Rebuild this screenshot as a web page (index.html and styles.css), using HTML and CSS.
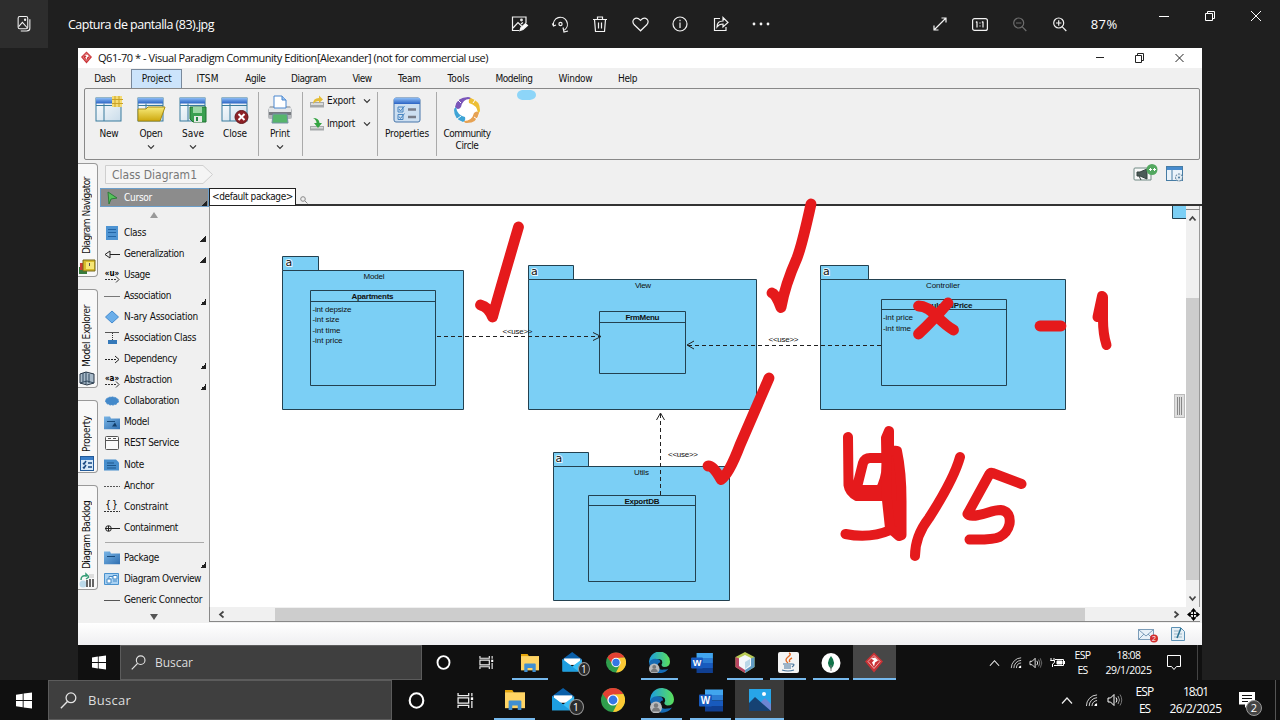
FILE: index.html
```html
<!DOCTYPE html>
<html lang="es">
<head>
<meta charset="utf-8">
<title>Captura de pantalla (83).jpg</title>
<link rel="stylesheet" href="styles.css">
</head>
<body>
<svg class="defs" width="0" height="0">
  <defs>
    <linearGradient id="gBlue" x1="0" y1="0" x2="0" y2="1"><stop offset="0" stop-color="#8cbcf5"/><stop offset="1" stop-color="#2b63c4"/></linearGradient>
    <linearGradient id="gPane" x1="0" y1="0" x2="1" y2="1"><stop offset="0" stop-color="#fff"/><stop offset="1" stop-color="#c9dcea"/></linearGradient>
    <linearGradient id="gYellow" x1="0" y1="0" x2="0" y2="1"><stop offset="0" stop-color="#f8ec7c"/><stop offset="1" stop-color="#cda80d"/></linearGradient>
    <linearGradient id="gEdge" x1="0" y1="0" x2="1" y2="0"><stop offset="0" stop-color="#1b9de2"/><stop offset="1" stop-color="#5be05a"/></linearGradient>
    <linearGradient id="gFolder" x1="0" y1="0" x2="1" y2="1"><stop offset="0" stop-color="#79b5e6"/><stop offset="1" stop-color="#2f6eb0"/></linearGradient>
  </defs>
  <symbol id="win" viewBox="0 0 16 16"><path fill="#fff" d="M0 2.2 6.700 1.200V7.500H0zM7.600 1.100 16 0v7.500H7.600zM0 8.500h6.700v6.300L0 13.800zM7.600 8.500H16V16l-8.400-1.100z"/></symbol>
  <symbol id="search" viewBox="0 0 16 16"><circle cx="10.300" cy="5.500" r="4.600" fill="none" stroke="#e4e4e4" stroke-width="1.200"/><path d="M7 9 .8 15.300" stroke="#e4e4e4" stroke-width="1.300"/></symbol>
  <symbol id="cortana" viewBox="0 0 16 16"><ellipse cx="8" cy="8" rx="6.400" ry="6.800" fill="none" stroke="#fff" stroke-width="2"/></symbol>
  <symbol id="taskview" viewBox="0 0 16 16"><path d="M1 1v2.500h10V1M1 15v-2.500h10V15M1 5.500h10v5H1zM14 1v3M14 8.500V15" fill="none" stroke="#eee" stroke-width="1.200"/><path d="M13 5h2.200v2.500H13z" fill="#fff"/></symbol>
  <symbol id="explorer" viewBox="0 0 22 22"><path d="M0 0h8l2 3H0z" fill="#e5a50a"/><path d="M0 2.500h22V20H0z" fill="#ffd464"/><path d="M4 12.500q0-1 1-1h12q1 0 1 1V22h-4v-5H8v5H4z" fill="#3f8fd2"/></symbol>
  <symbol id="mail" viewBox="0 0 26 26"><path d="M0 9 12 0l12 9v4H0z" fill="#0a5fa8"/><path d="M2 8h20v8H2z" fill="#fff"/><path d="M0 9v15h24V9l-12 9z" fill="#38bdf5"/><path d="M0 9v15h20z" fill="#1d9ee0"/></symbol>
  <symbol id="chrome" viewBox="0 0 24 24"><circle cx="12" cy="12" r="12" fill="#2f9e4c"/><path d="M1.600 6A12 12 0 0 1 22.400 6L12 7 8 14z" fill="#e34133"/><path d="M22.400 6A12 12 0 0 1 12 24l5-10-5-7.500z" fill="#fcc934"/><circle cx="12" cy="12" r="5.600" fill="#fff"/><circle cx="12" cy="12" r="4.400" fill="#3577e5"/></symbol>
  <symbol id="edge" viewBox="0 0 24 24"><path d="M0 12A12 12 0 0 1 24 11q0 6-7 6-4-1-2-4 1-5-5-5-6 0-10 5z" fill="url(#gEdge)"/><path d="M0 12q3-5 9-4 4 0 4 4-3 0-3 4 1 5 7 4 3 0 5-1-4 6-12 5Q1 22 0 12z" fill="#156bb5"/><circle cx="6" cy="19" r="6" fill="#b9bbbd"/><circle cx="6" cy="17" r="2.200" fill="#77797b"/><path d="M2 23q0-4 4-4t4 4z" fill="#77797b"/></symbol>
  <symbol id="word" viewBox="0 0 24 22"><path d="M6 0h18v6H6z" fill="#41a5ee"/><path d="M6 5.500h18V11H6z" fill="#2b7cd3"/><path d="M6 11h18v5.500H6z" fill="#185abd"/><path d="M6 16.500h18V22H6z" fill="#103f91"/><rect y="5" width="13" height="12" rx="1" fill="#185abd"/><text x="6.500" y="14.500" font-size="10" font-weight="700" fill="#fff" text-anchor="middle" font-family="Liberation Sans">W</text></symbol>
  <symbol id="photos" viewBox="0 0 22 22"><path d="M0 0h22v22H0z" fill="#27a5e8"/><path d="M12 13l4-4 6 6v7H12z" fill="#6c86d3"/><path d="M0 14l6-6 16 14H0z" fill="#164273"/><circle cx="15" cy="5" r="2" fill="#fff"/></symbol>
  <symbol id="chevup" viewBox="0 0 12 8"><path d="M1 7l5-5.500L11 7" fill="none" stroke="#eee" stroke-width="1.200"/></symbol>
  <symbol id="wifi" viewBox="0 0 14 14"><g fill="none" stroke="#ddd" stroke-width="1"><path d="M1.500 13.500A12 12 0 0 1 13 1.500"/><path d="M4.500 13.500A9 9 0 0 1 13 4.500"/><path d="M7.500 13.500A6 6 0 0 1 13 7.500"/></g><path d="M10 13.500a3.500 3.500 0 0 1 3-3v3z" fill="#fff"/></symbol>
  <symbol id="vol" viewBox="0 0 16 14"><path d="M1 5h2.500L7 1.500v11L3.500 9H1z" fill="none" stroke="#fff"/><path d="M9 4.500q2 2.500 0 5" fill="none" stroke="#fff"/><path d="M11 3q3 4 0 8" fill="none" stroke="#999"/><path d="M13 1.500q3.500 5.500 0 11" fill="none" stroke="#777"/></symbol>
  <symbol id="vp" viewBox="0 0 18 20"><path d="M9 0l9 9-9 11L0 9z" fill="#c93135"/><path d="M9 3l6 6-6 7-6-7z" fill="none" stroke="#efaaaa"/><path d="M6 6l4-1 3 3-3 2-1 4-2-4 2-2z" fill="#fff"/></symbol>
  <symbol id="down" viewBox="0 0 8 6"><path d="M1 1.300l3 3 3-3" fill="none" stroke="#333" stroke-width="1.200"/></symbol>
  <symbol id="panel" viewBox="0 0 28 28"><rect x="1" y="2" width="25" height="23" fill="url(#gPane)" stroke="#397b9d"/><path d="M1 2h25v5.500H1z" fill="url(#gBlue)"/><path d="M9 7.500V25M1 9.500h25" stroke="#397b9d" fill="none"/></symbol>
  <symbol id="folder" viewBox="0 0 16 14"><path d="M0 1h6l1 2h9v11H0z" fill="url(#gFolder)"/><path d="M3 6h8" stroke="#174a7b"/></symbol>
</svg>

<header class="photo-bar">
  <div class="photo-tab"><svg width="14" height="16" viewBox="0 0 12 15" fill="none" stroke="#f2f2f2"><rect x=".5" y=".5" width="9" height="11.500" rx="1.500"/><path d="M11.500 3v8.500q0 2.500-3 2.500H3M1 10l3.500-4L9 11"/><circle cx="7" cy="3.500" r=".6"/></svg></div>
  <div class="photo-title"><span data-w="146">Captura de pantalla (83).jpg</span></div>
  <div class="cells">
    <span><svg width="18" height="17" viewBox="0 0 18 17" fill="none" stroke="#f2f2f2" stroke-width="1.200"><path d="M15 7V1H1.500v13.500H8M2 12l5-5.500 4 4M10 8l2-1.500"/><circle cx="10.500" cy="4" r=".8"/><path d="M9 14.500l1-3L14.500 7.500l2 2-4.500 4z" fill="#fff"/></svg></span>
    <span><svg width="17" height="17" viewBox="0 0 17 17" fill="none" stroke="#f2f2f2" stroke-width="1.200"><path d="M1.500 9.500a7 7 0 1 1 11 4.500M11 11.500l1 4.500 4-1M.3 7.500l1.200 2.500 2.500-1"/><circle cx="8.500" cy="8" r="1.600"/></svg></span>
    <span><svg width="16" height="17" viewBox="0 0 16 17" fill="none" stroke="#f2f2f2" stroke-width="1.200"><path d="M1 3.500h14M5.500 3V1h5v2M2.500 3.500l1 12h9l1-12M6.500 6.500v6M9.500 6.500v6"/></svg></span>
    <span><svg width="17" height="15" viewBox="0 0 17 15" fill="none" stroke="#f2f2f2" stroke-width="1.200"><path d="M8.500 13.800L2 7.500Q-.2 4.500 2 2.200 5-.5 8.500 3.300 12-.5 15 2.200q2.200 2.300 0 5.300z"/></svg></span>
    <span><svg width="16" height="16" viewBox="0 0 16 16" fill="none" stroke="#f2f2f2" stroke-width="1.200"><circle cx="8" cy="8" r="7"/><path d="M8 6.500v5.500M8 3.700v1.500"/></svg></span>
    <span><svg width="16" height="16" viewBox="0 0 16 16" fill="none" stroke="#f2f2f2" stroke-width="1.200"><path d="M7 2.500H1.500v12H13V11M4 11q0-6 6-6V1.500l5 5-5 4.500V8Q6 8 4 11z"/></svg></span>
    <span><svg width="18" height="4" viewBox="0 0 18 4" fill="#f2f2f2"><circle cx="2" cy="2" r="1.400"/><circle cx="9" cy="2" r="1.400"/><circle cx="16" cy="2" r="1.400"/></svg></span>
  </div>
  <div class="cells cells-zoom">
    <span><svg width="14" height="14" viewBox="0 0 14 14" fill="none" stroke="#f2f2f2" stroke-width="1.200"><path d="M1 13L13 1M8.500 1H13v4.500M1 8.500V13h4.500"/></svg></span>
    <span><svg width="16" height="13" viewBox="0 0 16 13" fill="none" stroke="#f2f2f2" stroke-width="1.200"><rect x=".6" y=".6" width="14.800" height="11.800" rx="2"/><path d="M5 3.500V9.500M11 3.500V9.500M8 4.500v1M8 7.500v1M4 4.500l1-1M10 4.500l1-1"/></svg></span>
    <span><svg width="14" height="15" viewBox="0 0 14 15" fill="none" stroke="#6d6d6d" stroke-width="1.200"><circle cx="5.700" cy="6" r="5"/><path d="M9.300 9.800l4 4.200M3 6h5.400"/></svg></span>
    <span><svg width="14" height="15" viewBox="0 0 14 15" fill="none" stroke="#f2f2f2" stroke-width="1.200"><circle cx="5.700" cy="6" r="5"/><path d="M9.300 9.800l4 4.200M3 6h5.400M5.700 3.300v5.400"/></svg></span>
  </div>
  <div class="zoom-level"><span data-w="27">87%</span></div>
  <div class="cells window-buttons">
    <span><svg width="10" height="10" viewBox="0 0 10 10" stroke="#fff"><path d="M0 5.500h10"/></svg></span>
    <span><svg width="10" height="10" viewBox="0 0 10 10" fill="none" stroke="#fff"><path d="M.5 2.500h7v7h-7zM2.500 2.500v-2h7v7h-2"/></svg></span>
    <span><svg width="10" height="10" viewBox="0 0 10 10" stroke="#fff"><path d="M0 0l10 10M10 0L0 10"/></svg></span>
  </div>
</header>

<main class="photo">
  <div class="vp-title">
    <svg width="11" height="13"><use href="#vp"/></svg><span class="vp-name" data-w="390">Q61-70 * - Visual Paradigm Community Edition[Alexander] (not for commercial use)</span>
    <div class="cells vp-buttons">
      <span><svg width="10" height="10" viewBox="0 0 10 10" stroke="#222"><path d="M1 4.500h8"/></svg></span>
      <span><svg width="9" height="10" viewBox="0 0 9 10" fill="none" stroke="#222"><path d="M.5 2.500h6v7h-6zM2.500 2.500v-2h6v7h-2"/></svg></span>
      <span><svg width="9" height="10" viewBox="0 0 9 10" stroke="#222"><path d="M.5 1l8 8M8.500 1l-8 8"/></svg></span>
    </div>
  </div>
  <nav class="menu">
    <span data-w="21">Dash</span><span class="on"><b data-w="30">Project</b></span><span data-w="22">ITSM</span><span data-w="20">Agile</span><span data-w="35">Diagram</span><span data-w="19">View</span><span data-w="23">Team</span><span data-w="22">Tools</span><span data-w="37">Modeling</span><span data-w="34">Window</span><span data-w="19">Help</span>
  </nav>
  <section class="ribbon">
    <div class="group files">
      <div class="btn"><svg width="28" height="28" viewBox="0 0 28 28"><use href="#panel"/><path d="M17 0h10v11H17z" fill="#f6dc73"/><path d="M17 3.500h11M17 7.500h11M20 0v11M24 0v11" stroke="#c9a328" fill="none"/></svg><span data-w="19">New</span></div>
      <div class="btn"><svg width="28" height="28" viewBox="0 0 28 28"><use href="#panel"/><path d="M1 25V13h8l2-2h17l-5 14z" fill="url(#gYellow)" stroke="#a88b12"/></svg><span data-w="23">Open</span><svg class="dd" width="8" height="6"><use href="#down"/></svg></div>
      <div class="btn"><svg width="28" height="28" viewBox="0 0 28 28"><use href="#panel"/><path d="M11 11h16v15H14l-3-3z" fill="#3aa050" stroke="#1f7331"/><path d="M14 11h9v6h-9z" fill="#9bd7a5"/><path d="M15 20h8v6h-8z" fill="#e4e9e5"/><path d="M17 21h2v4h-2z" fill="#284"/></svg><span data-w="22">Save</span><svg class="dd" width="8" height="6"><use href="#down"/></svg></div>
      <div class="btn"><svg width="28" height="28" viewBox="0 0 28 28"><use href="#panel"/><circle cx="20.500" cy="21" r="6.500" fill="#8e2126" stroke="#65181b"/><path d="M17.500 18l6 6M23.500 18l-6 6" stroke="#fff" stroke-width="2"/></svg><span data-w="24">Close</span></div>
    </div>
    <div class="group print">
      <div class="btn"><svg width="26" height="28" viewBox="0 0 26 28"><path d="M3 10h20l2 4v7q0 2-2 2H3q-2 0-2-2v-7z" fill="#b4b7ba"/><path d="M2 12h22v4H2z" fill="#e2e4e6"/><path d="M2 16h22v3H2z" fill="#777b80"/><path d="M7 0h8l4 4v8H7z" fill="#fff" stroke="#4a87cf"/><path d="M15 0v4h4" fill="#9dc4f0" stroke="#4a87cf"/><path d="M6 18h14l1 9H5z" fill="#56b56b" stroke="#7590a5"/></svg><span data-w="20">Print</span><svg class="dd" width="8" height="6"><use href="#down"/></svg></div>
    </div>
    <div class="group io">
      <div><svg width="14" height="13" viewBox="0 0 14 13"><path d="M0 7h14v5.500H0z" fill="#a5a8aa"/><path d="M1 8h12v2H1z" fill="#d9dadb"/><path d="M3 9q0-6 6-6V.5l4 4-4 3.500V6Q5 6 3 9z" fill="#e5bd35"/></svg><span data-w="28">Export</span><svg width="8" height="6"><use href="#down"/></svg></div>
      <div><svg width="14" height="13" viewBox="0 0 14 13"><path d="M0 8h14v4.500H0z" fill="#a5a8aa"/><path d="M1 9h12v1.500H1z" fill="#d9dadb"/><path d="M3 0q6 0 6.500 5H12l-4 5-4-5h2.500Q6.500 2 3 0z" fill="#35a443"/></svg><span data-w="28">Import</span><svg width="8" height="6"><use href="#down"/></svg></div>
    </div>
    <div class="group wide">
      <div class="btn"><svg width="28" height="28" viewBox="0 0 28 28"><rect x="1" y="2" width="26" height="24" rx="2" fill="#cddff1" stroke="#4775a9"/><path d="M1 2h26v6H1z" fill="url(#gBlue)"/><path d="M5 11h5v5H5zM5 18.500h5v5H5zM6 13l1.500 2 4-5M6 20.500l1.500 2 4-5" fill="none" stroke="#4784c0"/><path d="M15 13.500h8M15 21h8" stroke="#777c89" stroke-width="2.500"/></svg><span data-w="44">Properties</span></div>
    </div>
    <div class="group circle">
      <div class="btn"><svg width="28" height="28" viewBox="0 0 28 28"><circle cx="14" cy="14" r="13" fill="#fff"/><path d="M2 11Q4 1 15 1q3 0 3 2-8-1-10 8-3 4-6 0z" fill="#7a56b8"/><path d="M18 2q9 3 9 12 0 3-2 3-1-8-9-10-1-4 2-5z" fill="#edbf35"/><path d="M26 17q-2 10-12 10-3 0-3-2 8 0 10-8 3-3 5 0z" fill="#e6a254"/><path d="M10 26Q1 23 1 14q0-2 2-3 1 8 9 10 1 4-2 5z" fill="#3fa4d5"/><path d="M5 4l3 3M22 4l-2 3M24 23l-3-2M4 23l4-3" stroke="#fff"/></svg><span data-w="47">Community</span><span class="line2" data-w="23">Circle</span></div>
    </div>
  </section>

  <section class="work">
    <aside class="side">
      <div class="tab t1"><svg width="16" height="17" viewBox="0 0 16 17"><path d="M0 9h8v7H0z" fill="#387b3c"/><path d="M1 5h6v7H1z" fill="#cb3e37"/><path d="M4 2h12v11H4z" fill="#d8bc2c" stroke="#77681b"/><path d="M7 4h8v7H7z" fill="#f6e777"/><path d="M10.500 5v3" stroke="#555"/></svg><span data-w="77" data-axis="y">Diagram Navigator</span></div>
      <div class="tab t2"><svg width="16" height="15" viewBox="0 0 16 15"><path d="M1 3l6-2 8 2v9l-7 2-7-2z" fill="#a8bac9" stroke="#283746"/><path d="M4 2v9M7 1v12M10 3v9M1 12l7-2 7 2" stroke="#31485d" fill="none"/></svg><span data-w="62" data-axis="y">Model Explorer</span></div>
      <div class="tab t3"><svg width="14" height="15" viewBox="0 0 14 15"><rect x=".5" y=".5" width="13" height="14" fill="#d5e8f8" stroke="#225a99"/><path d="M1 1h12v3H1z" fill="#3a7fca"/><path d="M3 7l1 1 2-3M3 11l1 1 2-3M8 7h4M8 11h4" fill="none" stroke="#174780" stroke-width="1.500"/></svg><span data-w="36" data-axis="y">Property</span></div>
      <div class="tab t4"><svg width="15" height="15" viewBox="0 0 15 15"><circle cx="4" cy="11" r="3.500" fill="#bbd9e9"/><path d="M2 7q0-5 5-4V1l3 3-3 2" fill="none" stroke="#369d76" stroke-width="1.500"/><path d="M8 7v7M11 6v8M14 6v8" stroke="#555" stroke-width="1.800"/><path d="M10 1h5v4h-5z" fill="#ddd"/></svg><span data-w="68" data-axis="y">Diagram Backlog</span></div>
    </aside>
    <div class="center">
      <div class="crumbs"><svg width="109" height="20" viewBox="0 0 109 20"><path d="M.5.5H98l9.500 9-9.500 9H.5z" fill="#f5f5f5" stroke="#cfcfcf"/><text x="7" y="14" textLength="85" lengthAdjust="spacingAndGlyphs" class="crumb-text">Class Diagram1</text></svg>
        <div class="crumb-tools"><svg width="25" height="20" viewBox="0 0 25 20"><path d="M1 5q0-1 1-1h16v12H2q-1 0-1-1z" fill="#f7f8f8" stroke="#718a84"/><path d="M4 8h3l7-3v10l-7-3H4zM6 12l2 4" fill="#4b5b57" stroke="#35423f"/><circle cx="19" cy="5.500" r="5.500" fill="#53a860"/><path d="M16 5.500h3M17.500 4v3M20 5.500h3M21.500 4v3" stroke="#fff"/></svg><svg width="18" height="18" viewBox="0 0 18 18"><rect x=".5" y="1.500" width="16" height="14" fill="#eaf3fa" stroke="#467ca4"/><path d="M1 2h15v3H1z" fill="#468bce"/><path d="M6 5v10" stroke="#467ca4"/><circle cx="13" cy="12.500" r="3.500" fill="#e0eaf1" stroke="#4a7392" stroke-dasharray="2 1"/><circle cx="13" cy="12.500" r="1" fill="#47779c"/></svg></div>
      </div>
      <div class="editor">
        <aside class="palette">
          <div class="row cursor more"><svg width="16" height="16" viewBox="0 0 16 16"><path d="M4 2l9 6-6 1-2 5z" fill="#55c35b" stroke="#2c7d38"/></svg><span data-w="28">Cursor</span></div>
          <div class="scroll"><svg width="8" height="6" viewBox="0 0 8 6"><path d="M4 0l4 6H0z" fill="#999"/></svg></div>
          <div class="row more"><svg width="16" height="16" viewBox="0 0 16 16"><path d="M2 1h12v14H2z" fill="#4e94d3"/><path d="M4 4.500h8M4 7.500h8M4 11.500h8" stroke="#2366a7"/></svg><span data-w="22">Class</span></div>
          <div class="row more"><svg width="16" height="16" viewBox="0 0 16 16" fill="none" stroke="#222"><path d="M6 8.500h10M1 8.500L6 5v7z"/></svg><span data-w="60">Generalization</span></div>
          <div class="row"><svg width="16" height="16" viewBox="0 0 16 16"><text x="8" y="9" class="mini">«u»</text><path d="M1 12.500h11" stroke="#333" stroke-dasharray="2 1"/><path d="M12 9.500l3 3-3 3" fill="none" stroke="#333"/></svg><span data-w="26">Usage</span></div>
          <div class="row more"><svg width="16" height="16" viewBox="0 0 16 16"><path d="M0 8.500h16" stroke="#777"/></svg><span data-w="47">Association</span></div>
          <div class="row"><svg width="16" height="16" viewBox="0 0 16 16"><path d="M8 2l6.500 6L8 14 1.500 8z" fill="#6baee9" stroke="#438bcf"/></svg><span data-w="74">N-ary Association</span></div>
          <div class="row"><svg width="16" height="16" viewBox="0 0 16 16"><path d="M1 2.500h14" stroke="#555"/><path d="M8.500 3v7" stroke="#333" stroke-dasharray="1 1"/><path d="M4 10h9v4H4z" fill="#3579b9"/></svg><span data-w="72">Association Class</span></div>
          <div class="row more"><svg width="16" height="16" viewBox="0 0 16 16" fill="none" stroke="#222"><path d="M1 8.500h12" stroke-dasharray="2 1"/><path d="M11 5l4 3.500-4 3.500"/></svg><span data-w="53">Dependency</span></div>
          <div class="row more"><svg width="16" height="16" viewBox="0 0 16 16"><text x="8" y="9" class="mini">«a»</text><path d="M1 12.500h11" stroke="#333" stroke-dasharray="2 1"/><path d="M12 9.500l3 3-3 3" fill="none" stroke="#333"/></svg><span data-w="48">Abstraction</span></div>
          <div class="row"><svg width="16" height="16" viewBox="0 0 16 16"><ellipse cx="8" cy="8" rx="6.500" ry="4" fill="#4389ca" stroke="#4389ca" stroke-dasharray="2 1"/></svg><span data-w="55">Collaboration</span></div>
          <div class="row"><svg width="16" height="15" viewBox="0 0 16 14"><use href="#folder"/><path d="M8 11l3-4 2 4z" fill="#123d68"/></svg><span data-w="25">Model</span></div>
          <div class="row"><svg width="16" height="16" viewBox="0 0 16 16"><rect x="1.500" y="1.500" width="13" height="13" rx="1" fill="#fafafa" stroke="#555"/><path d="M1 5.500h14M4 3.500h3M9 3.500h3" stroke="#555"/></svg><span data-w="55">REST Service</span></div>
          <div class="row"><svg width="16" height="16" viewBox="0 0 16 16"><path d="M0 2.500h12l3 3v8H0z" fill="#478ecc"/><path d="M3 6h7M3 8.500h9M3 11h9" stroke="#1e578b"/></svg><span data-w="20">Note</span></div>
          <div class="row"><svg width="16" height="16" viewBox="0 0 16 16"><path d="M0 8.500h16" stroke="#555" stroke-dasharray="2 1"/></svg><span data-w="30">Anchor</span></div>
          <div class="row"><svg width="16" height="16" viewBox="0 0 16 16"><text x="8" y="9" class="mini brace">{}</text><path d="M0 12.500h16" stroke="#333" stroke-dasharray="2 1"/></svg><span data-w="44">Constraint</span></div>
          <div class="row"><svg width="16" height="16" viewBox="0 0 16 16" fill="none" stroke="#222"><circle cx="4.500" cy="8.500" r="2.800"/><path d="M1 8.500h15M4.500 6v5"/></svg><span data-w="54">Containment</span></div>
          <div class="rule"></div>
          <div class="row more"><svg width="16" height="15" viewBox="0 0 16 14"><use href="#folder"/></svg><span data-w="35">Package</span></div>
          <div class="row"><svg width="16" height="16" viewBox="0 0 16 16"><path d="M.5 2.500h14v11H.5z" fill="#a9d1f2" stroke="#4a92ce"/><path d="M3 8h4v4H3zM9 4.500h4V8H9zM5 8V5.500h4M9 10h4" fill="#fff" stroke="#4389c6"/></svg><span data-w="77">Diagram Overview</span></div>
          <div class="row"><svg width="16" height="16" viewBox="0 0 16 16"><path d="M0 8.500h16" stroke="#555"/></svg><span data-w="78">Generic Connector</span></div>
          <div class="scroll end"><svg width="8" height="6" viewBox="0 0 8 6"><path d="M4 6l4-6H0z" fill="#555"/></svg></div>
        </aside>
        <div class="canvas">
          <div class="package"><span><b data-w="81">&lt;default package&gt;</b></span><svg width="8" height="8" viewBox="0 0 8 8" fill="none" stroke="#888"><circle cx="3" cy="3" r="2.300"/><path d="M5 5l2.500 2.500"/></svg></div>
          <div class="view">
            <svg class="diagram" width="977" height="401" viewBox="209 206 977 401">
              <g class="shape">
                <path d="M282.500 270.500v-14h36v14M282.500 270.500h181v139h-181zM310.500 290.500h125v95h-125zM310.500 301.500h125"/>
                <path d="M528.500 279.500v-14h45v14M528.500 279.500h228v130h-228zM599.500 311.500h86v62h-86zM599.500 322.500h86"/>
                <path d="M820.500 279.500v-14h48v14M820.500 279.500h245v130h-245zM881.500 299.500h125v86h-125zM881.500 309.500h125"/>
                <path d="M553.500 466.500v-14h35v14M553.500 466.500h176v134h-176zM588.500 495.500h107v86h-107zM588.500 505.500h107"/>
                <path d="M1172.500 206v12.500H1190V206"/>
              </g>
              <g class="wire"><path class="dash" d="M437 336.500h163M881 345.500H688M660.500 495V413"/><path d="M593 332.500l8 4-8 4M694 341l-7 4 7 4M656.500 420l4-7 4 7"/></g>
              <g class="stamp"><text x="285.500" y="265.500">a</text><text x="531" y="274.500">a</text><text x="823" y="274.500">a</text><text x="555.500" y="461.500">a</text></g>
              <g class="label">
                <text x="374" y="279" textLength="21">Model</text><text x="643" y="288" textLength="16">View</text><text x="943" y="288" textLength="34">Controller</text><text x="641.500" y="475" textLength="15">Utils</text>
                <text x="517.500" y="334" textLength="30">&lt;&lt;use&gt;&gt;</text><text x="783.500" y="342" textLength="30">&lt;&lt;use&gt;&gt;</text><text x="683" y="457" textLength="30">&lt;&lt;use&gt;&gt;</text>
              </g>
              <g class="label strong"><text x="372.500" y="299" textLength="42">Apartments</text><text x="642.500" y="320" textLength="34">FrmMenu</text><text x="944" y="308" textLength="57">CalculatedPrice</text><text x="642" y="503.500" textLength="35">ExportDB</text></g>
              <g class="attr"><text x="312.500" y="311.500" textLength="39">-int depsize</text><text x="312.500" y="322" textLength="27">-int size</text><text x="312.500" y="332.500" textLength="28">-int time</text><text x="312.500" y="343" textLength="30">-int price</text><text x="883" y="320" textLength="30">-int price</text><text x="883" y="330.500" textLength="28">-int time</text></g>
              <rect x="1174.500" y="394.500" width="10" height="23" fill="#dedede" stroke="#bbb"/><path d="M1177.500 397v18M1179.500 397v18M1181.500 397v18" stroke="#888"/>
            </svg>
            <div class="vscroll"><i class="nub"></i><svg width="9" height="7" viewBox="0 0 9 7"><path d="M1.500 5.500l3-3.500 3 3.500" fill="none" stroke="#444" stroke-width="1.700"/></svg><i class="thumb"></i><svg width="9" height="7" viewBox="0 0 9 7"><path d="M1.500 1.500l3 3.500 3-3.500" fill="none" stroke="#444" stroke-width="1.700"/></svg></div>
          </div>
          <div class="hscroll"><svg width="7" height="9" viewBox="0 0 7 9"><path d="M5.500 1.500L2 4.500l3.500 3" fill="none" stroke="#444" stroke-width="1.700"/></svg><i class="thumb"></i><svg width="7" height="9" viewBox="0 0 7 9"><path d="M1.500 1.500L5 4.500l-3.500 3" fill="none" stroke="#444" stroke-width="1.700"/></svg><svg class="pan" width="13" height="13" viewBox="0 0 13 13"><circle cx="6.500" cy="6.500" r="3.500" fill="none" stroke="#000"/><path d="M6.500 1v11M1 6.500h11" stroke="#000"/><path d="M6.500 0l2.500 3H4zM6.500 13l2.500-3H4zM0 6.500l3-2.500v5zM13 6.500l-3-2.500v5z"/></svg></div>
        </div>
      </div>
    </div>
  </section>
  <footer class="status"><svg width="21" height="17" viewBox="0 0 21 17"><rect x=".5" y="3.500" width="15" height="10" fill="#e8f1f8" stroke="#7c9db9"/><path d="M1 4l7 6 7-6M1 13l5-5M15 13l-5-5" fill="none" stroke="#7c9db9"/><circle cx="16" cy="12.500" r="4" fill="#d32d2d"/><text x="16" y="15" fill="#fff" font-size="7" text-anchor="middle" font-family="Liberation Sans">2</text></svg><svg width="14" height="16" viewBox="0 0 14 16"><path d="M.5 1.500h9l4 4v9H.5z" fill="#e5eff5" stroke="#5c91b5"/><path d="M3 5h5M3 8h8M3 11h8" stroke="#9ab7c8"/><path d="M10 2L6 12" stroke="#287091" stroke-width="1.500"/></svg></footer>
  <div class="taskbar inner">
    <span class="start"><svg width="14" height="15"><use href="#win"/></svg></span>
    <div class="searchbox"><svg width="15" height="15"><use href="#search"/></svg><span data-w="38">Buscar</span></div>
    <div class="apps">
      <span><svg width="15" height="15"><use href="#cortana"/></svg></span><span><svg width="15" height="15"><use href="#taskview"/></svg></span>
      <span class="run"><svg width="20" height="18"><use href="#explorer"/></svg></span><span><svg width="22" height="21"><use href="#mail"/></svg><em class="badge">1</em></span><span><svg width="20" height="21"><use href="#chrome"/></svg></span><span class="run"><svg width="21" height="21"><use href="#edge"/></svg></span><span><svg width="22" height="20"><use href="#word"/></svg></span>
      <span class="run"><svg width="20" height="21" viewBox="0 0 20 21"><path d="M10 0l9.500 5v10L10 21 .5 15V5z" fill="#b9cb55"/><path d="M.5 5v10l9.500 6V9z" fill="#b74562"/><path d="M19.500 5v10L10 21V9z" fill="#609bc4"/><path d="M10 3l6 3v8l-6 4-6-4V6z" fill="#f3f7f9"/><path d="M10 10v7l5-4V7z" fill="#b9d7e7"/></svg></span>
      <span class="run"><svg width="21" height="21" viewBox="0 0 21 21"><rect width="21" height="21" rx="2" fill="#f4f4f4"/><path d="M10 11q-4-3 0-6t1-4M12 10q-2-2 2-4" fill="none" stroke="#e26b25" stroke-width="1.400"/><path d="M5 12h9M6 14h7M6 16h7M4 18q6 2 12 0M14 12q4 0 0 3" fill="none" stroke="#47749b" stroke-width="1.200"/></svg></span>
      <span class="run"><svg width="20" height="20" viewBox="0 0 20 20"><ellipse cx="10" cy="10" rx="9.500" ry="10" fill="#fff"/><path d="M10 3q6 7 0 13-6-6 0-13z" fill="#12734a"/><path d="M10 12v6" stroke="#777"/></svg></span>
      <span class="run active"><svg width="18" height="21"><use href="#vp"/></svg></span>
    </div>
    <div class="tray">
      <span class="chev"><svg width="11" height="8"><use href="#chevup"/></svg></span><span><svg width="12" height="13"><use href="#wifi"/></svg></span><span><svg width="14" height="12"><use href="#vol"/></svg></span><span class="battery"><svg width="15" height="11" viewBox="0 0 15 11" fill="none" stroke="#fff"><path d="M5 2.500h8.500v6H4M14.500 4v3M1 1v3M4 1v3M.5 3.500h4v2l-2 1.500V10"/><path d="M7 4h5v3H7z" fill="#fff"/></svg></span>
      <div class="two lang"><span data-w="16">ESP</span><span data-w="10">ES</span></div><div class="two date"><span data-w="24">18:08</span><span data-w="46">29/1/2025</span></div><span class="note"><svg width="14" height="16" viewBox="0 0 14 16"><path d="M.5.500h13v11H9.500L7 14.500 4.500 11.500H.5z" fill="none" stroke="#fff"/></svg></span>
    </div>
  </div>
  <svg class="ink" width="1124" height="597" viewBox="78 48 1124 597">
    <path class="dot" d="M522 90h9q5 1 5 5t-6 5h-8q-5-1-5-5t5-5z"/>
    <path d="M480.500 305q8 2 12 12Q500 290 518.500 227"/>
    <path d="M772 293q4 1 9 14.500Q785 285 797 258 802 245 811 204"/>
    <path d="M708 466q5-1 13 13.500Q729 474 740 445L769 378"/>
    <path d="M918.500 306q9 0 19 11 9 9 16 13M918.500 334q14-13 29.500-31"/>
    <path d="M1040 326h21"/>
    <path class="blob" d="M1102 296l-4.500 21 5.500-1z"/><path class="thin" d="M1103 297V320q0 14 3.500 25"/>
    <path class="thin" d="M848 437l.5 48q1 7 8.500 11h28M857 490H880M886 458H870q-5 0-7 5l-6 24M887 464q-1 18-8 28M845.500 534q24 5 45-4"/>
    <path class="blob" d="M889 431v19l8 1q4.500 21 4.500 50v34l-2.500 1-9-8-3-28-1-62z"/>
    <path class="thin" d="M960 457q-6 22-31 61-14 18-14 38M1021.500 484l-29-11q-2-1-3 1l-22 40q2 3 11 1c8-1 14-5 22-5 8 1 10 7 9 14q-2 9-10 13-6 3-30 2.500"/>
  </svg>
</main>

<footer class="taskbar outer">
  <span class="start"><svg width="16" height="17"><use href="#win"/></svg></span>
  <div class="searchbox"><svg width="17" height="17"><use href="#search"/></svg><span data-w="43">Buscar</span></div>
  <div class="apps">
    <span><svg width="17" height="17"><use href="#cortana"/></svg></span><span><svg width="17" height="17"><use href="#taskview"/></svg></span><span class="run"><svg width="22" height="20"><use href="#explorer"/></svg></span><span><svg width="26" height="24"><use href="#mail"/></svg><em class="badge">1</em></span><span><svg width="24" height="24"><use href="#chrome"/></svg></span><span class="run"><svg width="24" height="25"><use href="#edge"/></svg></span><span class="run"><svg width="24" height="23"><use href="#word"/></svg></span><span class="run active"><svg width="22" height="22"><use href="#photos"/></svg></span>
  </div>
  <div class="tray">
    <span class="chev"><svg width="12" height="9"><use href="#chevup"/></svg></span><span><svg width="13" height="14"><use href="#wifi"/></svg></span><span><svg width="16" height="14"><use href="#vol"/></svg></span>
    <div class="two lang"><span data-w="18">ESP</span><span data-w="11">ES</span></div><div class="two date"><span data-w="25">18:01</span><span data-w="52">26/2/2025</span></div><span class="note"><svg width="16" height="16" viewBox="0 0 16 16"><path d="M0 0h16v12.500H9L6 16v-3.500H0z" fill="#fff"/><path d="M3 3.500h10M3 6.500h10M3 9.500h6" stroke="#111"/></svg><em class="badge">2</em></span>
  </div>
</footer>
<script src="fit.js"></script>
</body>
</html>
```

FILE: styles.css
```css
* { box-sizing: border-box; }
body { margin: 0; width: 1280px; height: 720px; overflow: hidden; display: flex; flex-direction: column; background: #1f1f1f; color: #fff; font: 12px "Open Sans", "Noto Sans", sans-serif; }
svg { display: block; flex: none; overflow: visible; }
span, b { white-space: nowrap; }
b { font-weight: inherit; }
em { font-style: normal; }
.defs { position: absolute; }
[data-w] { flex: none; }

.photo-bar { height: 48px; flex: none; display: flex; }
.photo-tab { width: 48px; background: #2d2d2d; display: flex; align-items: center; justify-content: center; }
.photo-title { width: 452px; padding-left: 20px; display: flex; align-items: center; font-size: 12.500px; }
.cells { display: flex; }
.cells > span { width: 40.100px; display: flex; align-items: center; justify-content: center; }
.cells-zoom { margin-left: 139px; }
.cells-zoom > span { width: 40px; }
.zoom-level { width: 61px; display: flex; align-items: center; padding-left: 11px; font-size: 13px; }
.window-buttons { height: 32px; }
.window-buttons > span { width: 46.300px; }

.photo { position: relative; width: 1124px; height: 632px; margin-left: 78px; flex: none; display: flex; flex-direction: column; background: #f0f0f0; color: #111; font-family: "DejaVu Sans Condensed", "DejaVu Sans", sans-serif; font-size: 10px; line-height: 12px; }
.vp-title { height: 20px; background: #fff; display: flex; align-items: center; padding: 0 0 1px 3px; }
.vp-name { margin-left: 6px; font: 11px "Open Sans", sans-serif; }
.vp-buttons { margin-left: auto; height: 20px; padding-right: 2px; }
.menu { height: 21px; display: grid; grid-template-columns: 53.500px 50.500px 51px 44.500px 62px 45px 50px 48px 63px 60px 44px; justify-items: center; align-items: center; }
.menu .on { width: 51px; height: 20px; margin-top: 1px; padding-bottom: 1px; background: #cce4fb; border: 1px solid #79899c; border-bottom: 0; display: flex; justify-content: center; align-items: center; }
.ribbon { height: 72px; flex: none; margin: -1px 2px 0 6px; border: 1px solid #888; border-radius: 2px; padding: 3px 0; display: flex; }
.group { display: flex; border-right: 1px solid #aaa; }
.files { padding: 0 2px 0 3px; }
.print { padding-right: 1px; }
.btn { width: 42px; display: flex; flex-direction: column; align-items: center; padding-top: 4px; }
.btn > span { margin-top: 4px; }
.btn .dd { margin-top: 4px; }
.btn .line2 { margin-top: 0; }
.io { width: 75px; flex-direction: column; padding: 2px 7px; gap: 9px; }
.io div { display: flex; align-items: center; height: 14px; }
.io div span { margin: 0 8px 0 3px; }
.wide .btn { width: 58px; }
.circle { border: 0; }
.circle .btn { width: 60px; }

.work { height: 463px; flex: none; display: flex; padding-top: 4px; }
.side { width: 21px; flex: none; margin-top: -1px; }
.tab { width: 20px; display: flex; flex-direction: column-reverse; align-items: center; gap: 4px; border: 1px solid #999; border-left: 0; border-radius: 0 4px 4px 0; background: #f8f8f8; padding: 0 2px 1px 0; }
.tab span { writing-mode: vertical-rl; transform: rotate(180deg); }
.t1 { height: 114px; margin-bottom: 12px; }
.t2 { height: 99px; margin-bottom: 12px; }
.t3 { height: 73px; margin-bottom: 12px; }
.t4 { height: 105px; }
.center { flex: 1; display: flex; flex-direction: column; }
.crumbs { height: 24px; flex: none; display: flex; justify-content: space-between; padding: 1px 18px 0 6px; }
.crumb-text { font-size: 12px; fill: #777; }
.crumb-tools { display: flex; gap: 8px; margin-top: -2px; align-items: center; height: 22px; }
.editor { flex: 1; display: flex; }
.palette { width: 111px; height: 434px; flex: none; border-right: 1px solid #999; }
.row { height: 21.100px; display: flex; align-items: center; gap: 4px; padding-left: 5px; background: linear-gradient(135deg, transparent 50%, #222 50%) right 3px bottom 1px / 0 0 no-repeat; }
.row.more { background-size: 6px 6px; }
.row.cursor { height: 19px; margin: 0 0 0 1px; border: 1px solid #6c9fcb; background-color: #8c8c8c; background-position: right 1px bottom 0; color: #fff; padding-left: 3px; }
.mini { font: 700 8px "DejaVu Sans Condensed"; text-anchor: middle; }
.brace { font-size: 10px; font-weight: 400; letter-spacing: 1px; }
.scroll { height: 15px; display: flex; justify-content: center; align-items: center; }
.scroll.end { height: 12px; }
.rule { height: 9px; margin: 0 5px 0 6px; background: linear-gradient(#aaa, #aaa) 0 4px / 100% 1px no-repeat; }
.canvas { flex: 1; display: flex; flex-direction: column; margin-left: -1px; }
.package { height: 18px; flex: none; border-bottom: 2px solid #333; display: flex; align-items: flex-end; gap: 4px; }
.package > span { width: 87px; height: 18px; margin-bottom: -2px; border: 1px solid #222; background: #fff; display: flex; align-items: center; padding-left: 2px; }
.view { height: 401px; display: flex; }
.diagram { background: #fff; width: 977px; height: 401px; overflow: hidden; box-shadow: inset 1px 0 #999; }
.vscroll { width: 14px; background: #f0f0f0; border-right: 1px solid #999; display: flex; flex-direction: column; align-items: center; }
.vscroll .nub { width: 14px; height: 4px; border-bottom: 1px solid #888; margin-bottom: 5px; }
.vscroll .thumb { width: 13px; height: 282px; margin: 76px 0 15px; background: #cdcdcd; }
.hscroll { height: 15px; margin-right: 2px; display: flex; align-items: center; border-bottom: 1px solid #888; border-left: 1px solid #888; padding-left: 8px; }
.hscroll .thumb { width: 810px; height: 13px; background: #cdcdcd; margin: 0 88px 0 50px; }
.hscroll .pan { margin-left: 7px; }
.status { height: 22px; flex: none; background: linear-gradient(#fff, #efeff1); display: flex; justify-content: flex-end; align-items: center; gap: 12px; padding-right: 17px; }

.taskbar { display: flex; background: #101010; color: #fff; font-family: "Open Sans", sans-serif; flex: none; position: relative; }
.taskbar > *, .tray > * { flex: none; }
.start, .apps > span, .tray > span { display: flex; align-items: center; justify-content: center; position: relative; }
.searchbox { display: flex; align-items: center; background: #3f3f3f; border: 1px solid #5c5c5c; color: #ddd; }
.apps, .tray { display: flex; }
.run { background: linear-gradient(#76b9ed, #76b9ed) center bottom / 84% 2px no-repeat; }
.active { background-color: #3a3a3a; background-size: 100% 2px; }
.badge { position: absolute; left: 50%; top: 50%; width: 15px; height: 16px; margin: -1px 0 0 5px; border-radius: 50%; border: 1px solid #999; background: #2b2b2b; font-size: 11px; line-height: 14px; text-align: center; }
.two { display: flex; flex-direction: column; align-items: center; justify-content: center; }
.inner { height: 35px; }
.inner .start { width: 42px; }
.inner .searchbox { width: 302px; padding-left: 10px; gap: 9px; font-size: 12px; }
.inner .apps > span { width: 43.100px; }
.inner .badge { width: 12px; height: 14px; line-height: 12px; font-size: 10px; margin-left: 5px; }
.inner .apps .active { background-color: #474747; }
.inner .tray { margin-left: auto; padding-right: 4px; border-right: 1px solid #444; margin-right: 4px; height: 35px; }
.inner .tray > span { width: 20px; }
.inner .tray .chev { width: 24px; }
.inner .tray .battery { width: 23px; }
.inner .two { font-size: 10.500px; line-height: 15px; }
.inner .lang { width: 27px; }
.inner .date { width: 65px; }
.inner .tray .note { width: 25px; margin-right: 7px; }
.outer { width: 1280px; height: 40px; }
.outer .start { width: 48px; }
.outer .searchbox { width: 344px; padding-left: 11px; gap: 11px; font-size: 13px; }
.outer .apps > span { width: 49px; }
.outer .tray { margin-left: auto; border-right: 1px solid #555; margin-right: 4px; }
.outer .tray > span { width: 23px; }
.outer .tray .chev { width: 26px; }
.outer .two { font-size: 12px; line-height: 17px; }
.outer .lang { width: 37px; }
.outer .date { width: 65px; }
.outer .tray .note { width: 38px; margin-right: 9px; }
.outer .note .badge { width: 16px; height: 16px; margin: 0 0 0 -1px; background: #444; line-height: 14px; }

.shape path { fill: #7bcff5; stroke: #234150; }
.wire path { fill: none; stroke: #222; }
.wire .dash { stroke-dasharray: 4 3; }
.stamp { font: 11px "DejaVu Sans", sans-serif; fill: #111; stroke: #e8f6fd; stroke-width: 2px; paint-order: stroke; }
.label { font: 8px "Liberation Sans", sans-serif; text-anchor: middle; fill: #111; }
.strong { font-weight: 700; }
.attr { font: 8px "Liberation Sans", sans-serif; fill: #111; }
.ink { position: absolute; left: 0; top: 0; pointer-events: none; fill: none; stroke: #e51a1c; stroke-width: 10.800; stroke-linecap: round; stroke-linejoin: round; }
.ink .thin { stroke-width: 10; }
.ink .blob { fill: #e51a1c; stroke-width: 10; }
.ink .dot { fill: #8dd5f8; stroke: none; }
```

FILE: fit.js
```js
// Tracks each label so that it fills the width given in data-w.
document.querySelectorAll("[data-w]").forEach(function (el) {
  var range = document.createRange();
  range.selectNodeContents(el);
  var box = range.getBoundingClientRect();
  var size = el.dataset.axis === "y" ? box.height : box.width;
  var gap = (Number(el.dataset.w) - size) / el.textContent.length;
  el.style.letterSpacing = gap.toFixed(3) + "px";
});
```
